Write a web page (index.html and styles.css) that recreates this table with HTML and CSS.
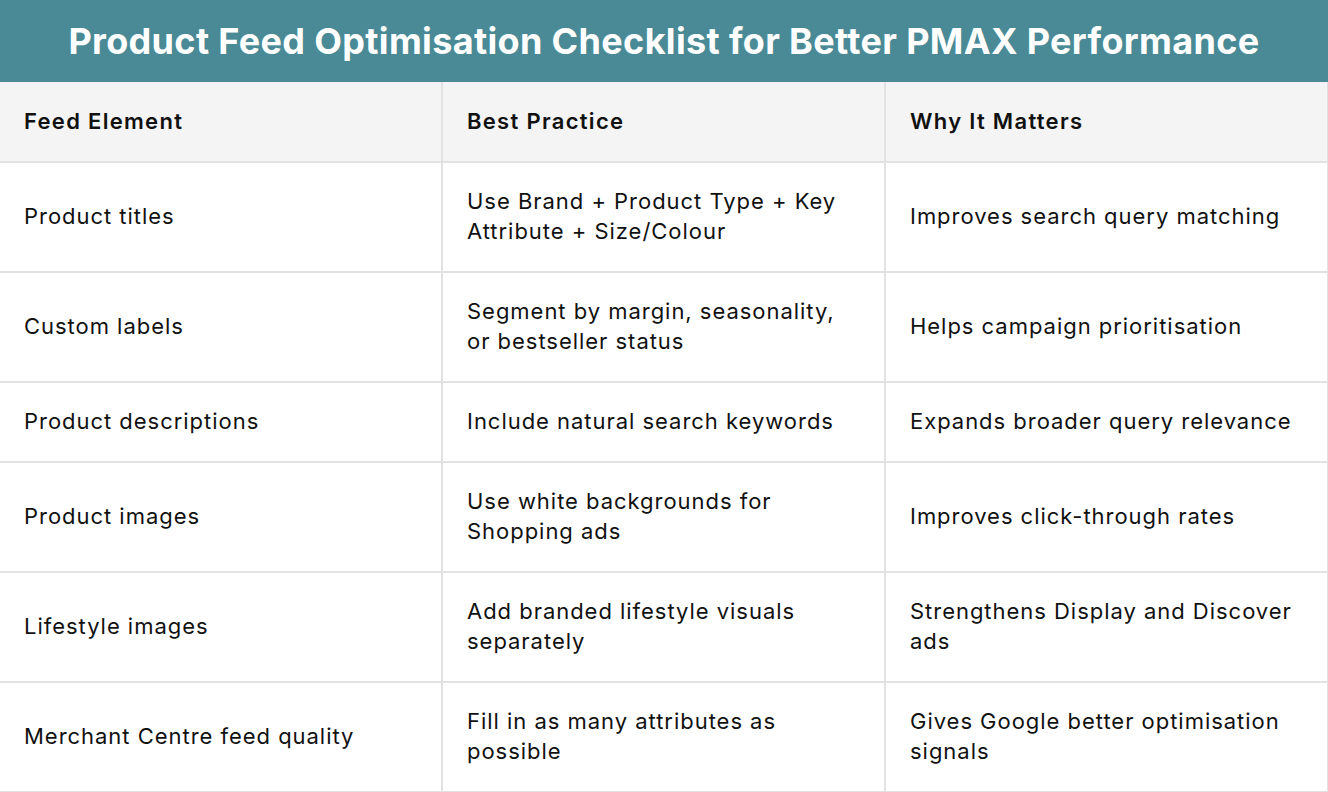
FILE: index.html
```html
<!DOCTYPE html>
<html>
<head>
<meta charset="utf-8">
<link rel="stylesheet" href="styles.css">
</head>
<body>
<div class="page">
  <h1 class="title">Product Feed Optimisation Checklist for Better PMAX Performance</h1>
  <table class="checklist">
    <colgroup>
      <col class="c1"><col class="c2"><col class="c3">
    </colgroup>
    <thead>
      <tr><th>Feed Element</th><th>Best Practice</th><th>Why It Matters</th></tr>
    </thead>
    <tbody>
      <tr><td>Product titles</td><td>Use Brand + Product Type + Key Attribute + Size/Colour</td><td>Improves search query matching</td></tr>
      <tr><td>Custom labels</td><td>Segment by margin, seasonality, or bestseller status</td><td>Helps campaign prioritisation</td></tr>
      <tr class="short"><td>Product descriptions</td><td>Include natural search keywords</td><td>Expands broader query relevance</td></tr>
      <tr><td>Product images</td><td>Use white backgrounds for Shopping ads</td><td>Improves click-through rates</td></tr>
      <tr><td>Lifestyle images</td><td>Add branded lifestyle visuals separately</td><td>Strengthens Display and Discover ads</td></tr>
      <tr><td>Merchant Centre feed quality</td><td>Fill in as many attributes as possible</td><td>Gives Google better optimisation signals</td></tr>
    </tbody>
  </table>
</div>
</body>
</html>
```
FILE: styles.css
```css
* { box-sizing: border-box; }
html, body { margin: 0; padding: 0; background: #ffffff; }
.page { width: 1328px; font-family: Inter, "Noto Sans", sans-serif; color: #111111; }
.title {
  margin: 0;
  height: 82px;
  background: #498a96;
  color: #ffffff;
  font-family: Inter, sans-serif;
  font-weight: 700;
  font-size: 36px;
  letter-spacing: 0.34px;
  display: flex;
  align-items: center;
  justify-content: center;
}
.checklist {
  width: 1328px;
  border-collapse: collapse;
  table-layout: fixed;
}
.c1 { width: 442px; }
.c2 { width: 443px; }
.c3 { width: 443px; }
.checklist th, .checklist td {
  border: 2px solid #e2e2e2;
  padding: 22px 23px 24px 24px;
  text-align: left;
  vertical-align: middle;
  font-size: 22px;
  line-height: 30px;
  letter-spacing: 0.97px;
}
.checklist tr > :first-child { border-left: none; }
.checklist thead tr th { border-top: none; background: #f4f4f4; font-weight: 600; height: 80px; letter-spacing: 1.3px; }
.checklist td { font-weight: 400; }
.checklist tbody tr { height: 110px; }
.checklist tbody tr.short { height: 80px; }
```
